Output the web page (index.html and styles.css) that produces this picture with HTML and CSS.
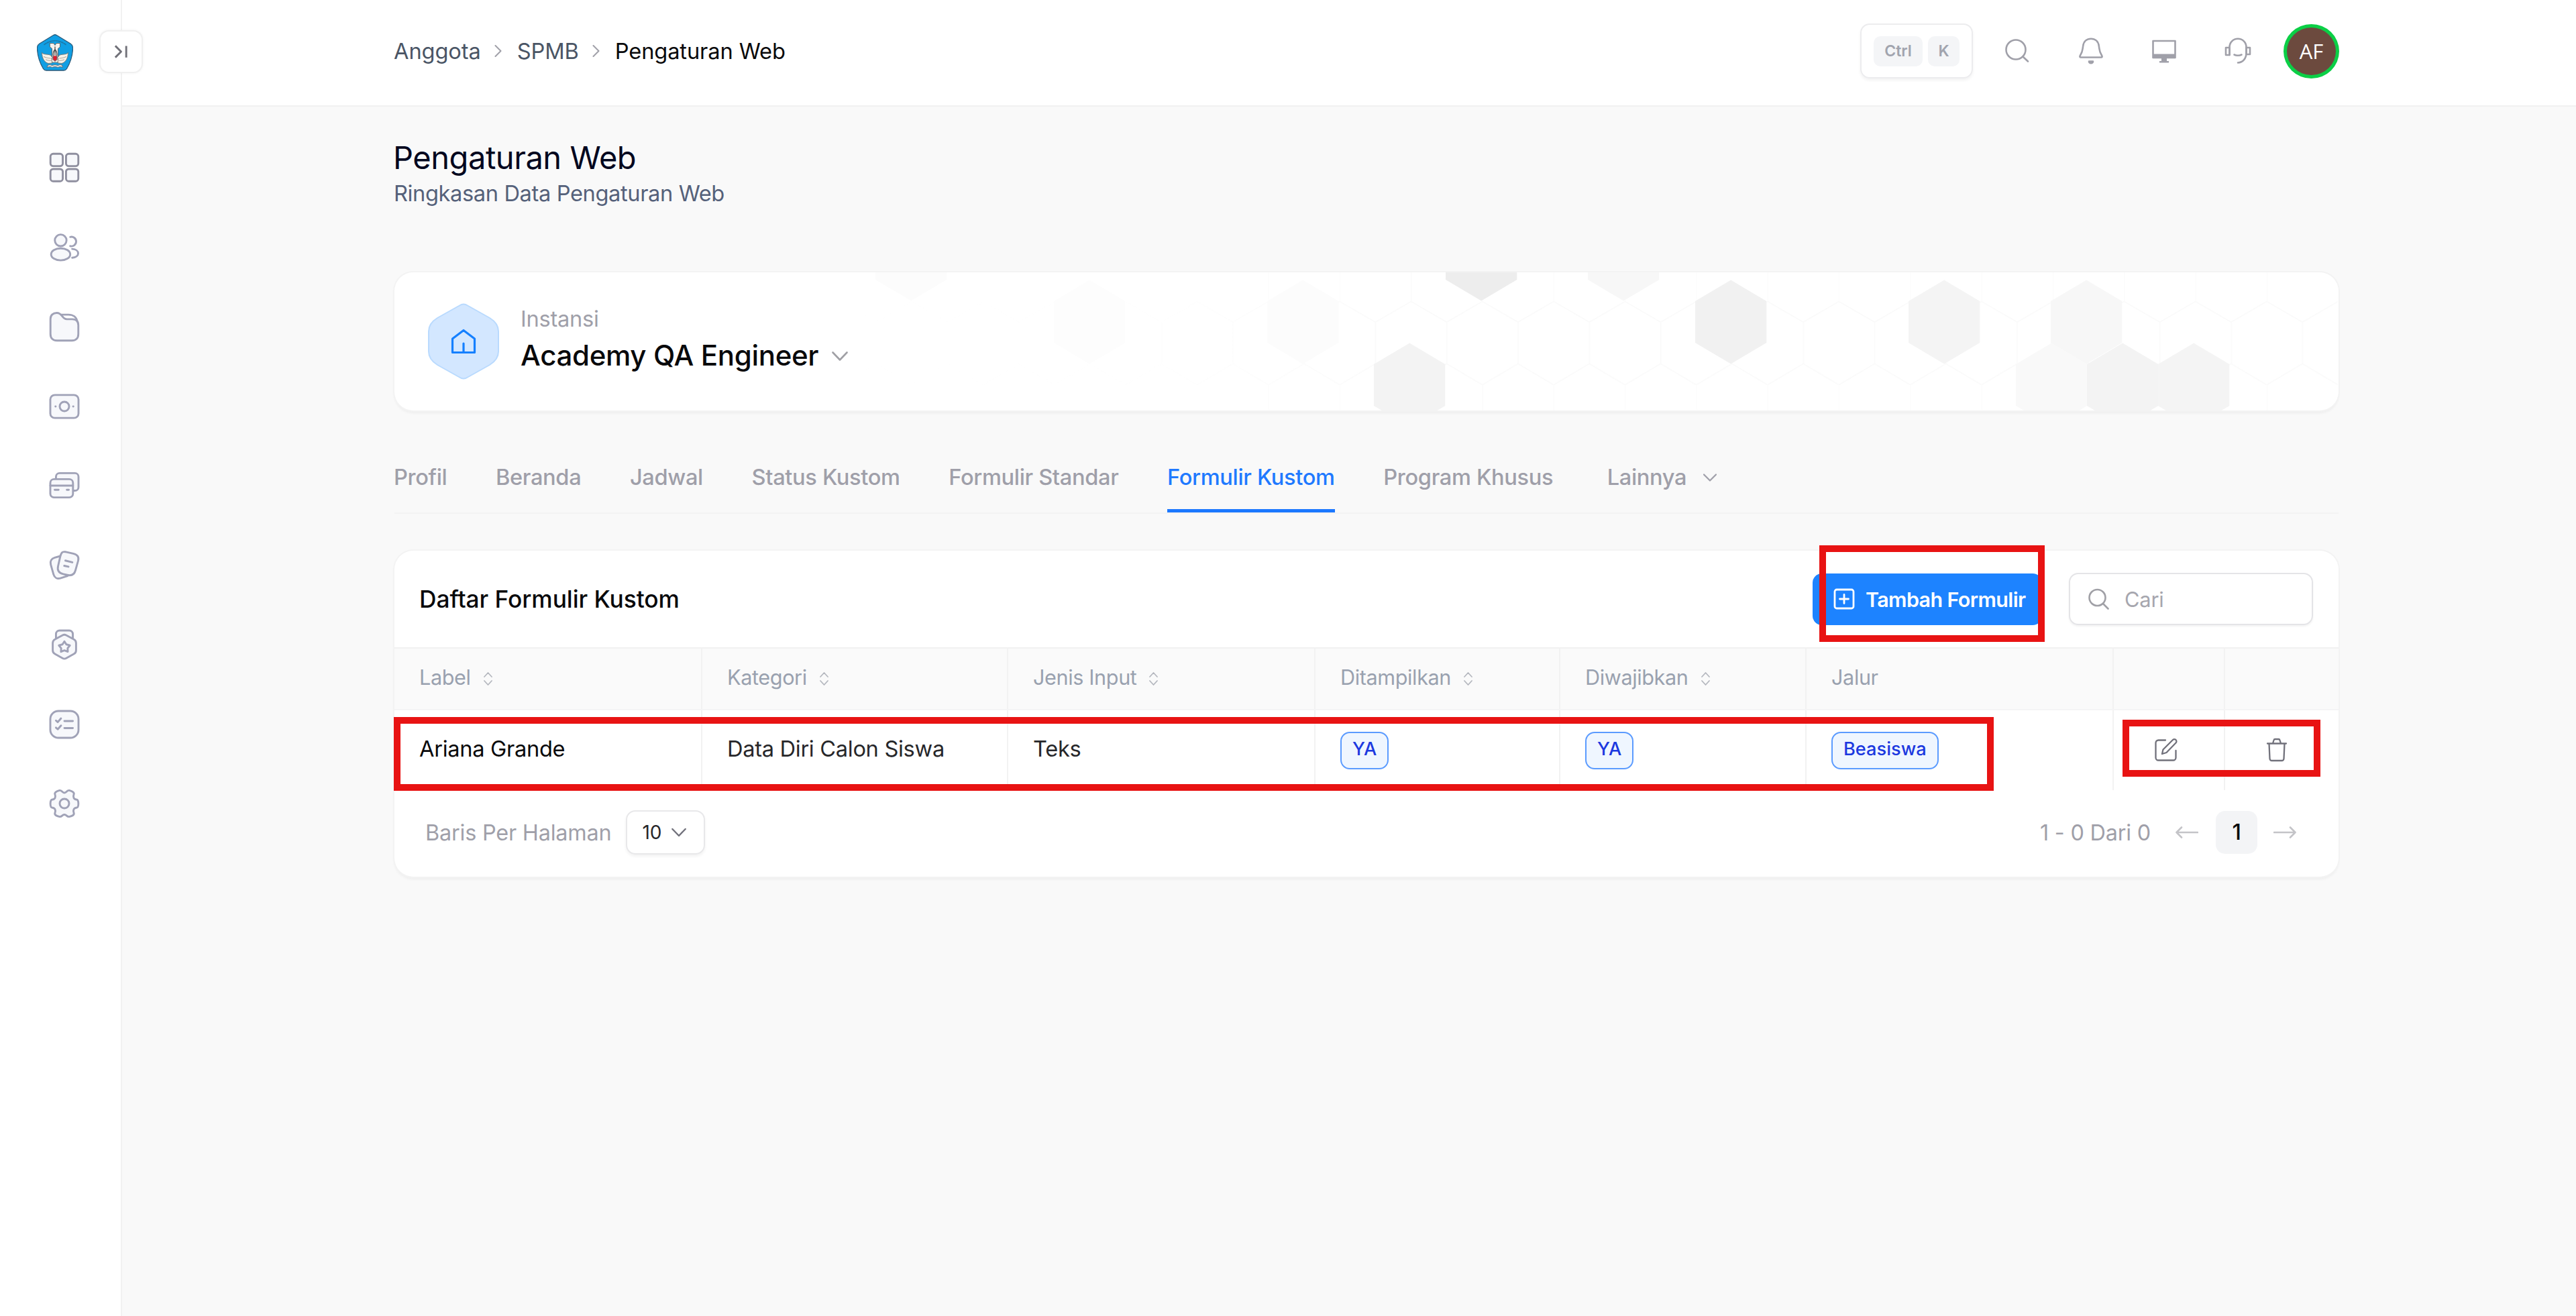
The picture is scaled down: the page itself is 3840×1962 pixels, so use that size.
FILE: index.html
```html
<!DOCTYPE html>
<html lang="id">
<head>
<meta charset="utf-8">
<title>Pengaturan Web</title>
<link rel="stylesheet" href="styles.css">
</head>
<body>
<div class="app">
  <aside class="sidebar">
    <div class="sidebar-top">
      <svg class="logo" viewBox="0 0 54 55">
        <path d="M24.500 1.500Q27 0 29.500 1.500L50 14Q54 16.500 53.500 22C53 33 49 44 44.500 51.500Q43 54 40 54H14Q11 54 9.500 51.500C5 44 1 33 .5 22Q0 16.500 4 14Z" fill="#109fe4" stroke="#2a5a7a" stroke-width="1.300"/>
        <path d="M11 15.500Q27 4 43 15.500" fill="none" stroke="#1c78a8" stroke-width="1.600" stroke-dasharray="3 1.500"/>
        <path d="M19.500 13.500H25L27 16.500 29 13.500H34.500V19L31.500 21.500V34H22.500V21.500L19.500 19Z" fill="#f4f1ee" stroke="#5a5a5a" stroke-width=".9"/>
        <path d="M27 19V31M24.500 33C23.500 28 25 25 27 22.500 29 25 30.500 28 29.500 33" fill="none" stroke="#4c4c4c" stroke-width="1.300"/>
        <path d="M7.500 27.500C11 31.500 16 29 20.500 31.500L24 36 22.500 43 17 43.500C12 42 7.500 37 7.500 27.500Z" fill="#f7f3ea" stroke="#77756e" stroke-width=".9"/>
        <path d="M46.500 27.500C43 31.500 38 29 33.500 31.500L30 36 31.500 43 37 43.500C42 42 46.500 37 46.500 27.500Z" fill="#f7f3ea" stroke="#77756e" stroke-width=".9"/>
        <path d="M10.500 33.500C14 36 17 35 20 36M13.500 38C16 39.500 18.500 39 21 39.500M43.500 33.500C40 36 37 35 34 36M40.500 38C38 39.500 35.500 39 33 39.500" fill="none" stroke="#aeaaa0" stroke-width="1.100"/>
        <path d="M22 36 27 40.500 32 36 31 42H23Z" fill="#f7f3ea" stroke="#77756e" stroke-width=".9"/>
        <path d="M24 34 27 31.500 30 34 29.500 38 27 40 24.500 38Z" fill="#dd1f2d"/>
        <path d="M16.500 46Q20 44.500 22.500 46.500 27 44.500 31.500 46.500 34 44.500 37.500 46L38.500 49.500Q34 47.500 31.500 49.500 27 47.500 22.500 49.500 20 47.500 15.500 49.500Z" fill="#e4e0d8" stroke="#56697a" stroke-width=".9"/>
      </svg>
    </div>
    <nav class="side-nav">
      <svg class="nav-icon nav-icon-strong" viewBox="0 0 24 24"><rect x="3.400" y="3.400" width="7.600" height="7.600" rx="1.700"/><rect x="13" y="3.400" width="7.600" height="7.600" rx="1.700"/><rect x="3.400" y="12.800" width="7.600" height="7.600" rx="1.700"/><rect x="13" y="12.800" width="7.600" height="7.600" rx="1.700"/></svg>
      <svg class="nav-icon" viewBox="0 0 24 24"><circle cx="9.700" cy="7.600" r="3.600"/><ellipse cx="9.700" cy="16.200" rx="5.900" ry="3.700"/><path class="open" d="M15.600 5.500a2.900 2.900 0 1 1 0 5.600M16.800 12.900c2.300.2 3.700 1.300 3.700 2.700 0 1.400-1.400 2.500-3.700 2.700"/></svg>
      <svg class="nav-icon" viewBox="0 0 24 24"><path d="M3.400 7.200C3.400 4.900 5 3.500 7.300 3.500c3.700 0 3 3.900 6.200 3.900h3.300c2.500 0 3.800 1.400 3.800 3.700v5.400c0 2.600-1.500 4.100-4.100 4.100h-9c-2.600 0-4.100-1.500-4.100-4.100z"/><path class="open" d="M10 4.600h4.500c2.800 0 5 1.500 5.400 4.200"/></svg>
      <svg class="nav-icon" viewBox="0 0 24 24"><rect x="3.300" y="4.900" width="17.400" height="14.200" rx="2.800"/><circle cx="12" cy="12" r="2.900"/><path class="open" d="M6.500 12h.1M17.400 12h.1"/></svg>
      <svg class="nav-icon" viewBox="0 0 24 24"><path d="M6.800 8V6.500a2.200 2.200 0 0 1 2.200-2.200h9.500a2.200 2.200 0 0 1 2.200 2.200v6.400a2.200 2.200 0 0 1-2.200 2.200h-1.200"/><rect x="3.300" y="8" width="14" height="11.300" rx="2.300"/><path class="open" d="M3.300 12h14M6 14.600h2.400M13.500 14.600h1.200"/></svg>
      <svg class="nav-icon" viewBox="0 0 24 24"><path d="M9.500 6.200 6 7.200c-2 .6-3 2.200-2.400 4.300l1.700 6c.6 2 2.200 3 4.200 2.400l4.500-1.400"/><path d="m12.500 3.600 5 1.100c2.600.6 3.600 2.100 3 4.400l-1.700 6c-.7 2.500-2.400 3.400-5 2.800l-2.500-.6c-2.800-.6-3.800-2.400-3.200-4.900l1.300-5.700c.6-2.400 1.100-3.400 3.100-3.100z"/><path class="open" d="m12.600 9 4.300 1.100M11.900 12.200l2.600.6"/></svg>
      <svg class="nav-icon" viewBox="0 0 24 24"><path d="M6.800 8V5.500A2.200 2.200 0 0 1 9 3.300h6a2.200 2.200 0 0 1 2.200 2.200V8"/><path d="M10.900 6.200a2.400 2.400 0 0 1 2.200 0l4.600 2.500a2.700 2.700 0 0 1 1.500 2.400v4.400c0 1-.5 1.900-1.400 2.300l-4.600 2.600a2.400 2.400 0 0 1-2.400 0l-4.600-2.600a2.600 2.600 0 0 1-1.400-2.300v-4.400c0-1 .5-1.900 1.500-2.400z"/><path d="m12 10 1.200 1.900 2.200.6-1.400 1.700.1 2.200-2.100-.8-2.100.8.100-2.200-1.400-1.700 2.200-.6z"/></svg>
      <svg class="nav-icon" viewBox="0 0 24 24"><rect x="3.300" y="3.700" width="17.400" height="16.600" rx="5"/><path class="open" d="m6.800 9.600 1.100 1 2-2.300M6.800 14l1.100 1 2-2.300M12 9.900h5.200M12 14.300h5.200"/></svg>
      <svg class="nav-icon" viewBox="0 0 24 24"><path d="M9 3.900c-2 .5-3.300 1.300-2.800 2.500.6 1.600 0 3-1.600 3.100-1.600.1-1.700 5 0 5.100 1.600.1 2.200 1.500 1.600 3.100-.5 1.300.9 2 2.800 2.400 1.500.3 1.600-1.300 3-1.300s1.500 1.600 3 1.300c1.900-.4 3.300-1.100 2.800-2.400-.6-1.600 0-3 1.600-3.100 1.700-.1 1.600-5 0-5.100-1.600-.1-2.200-1.500-1.600-3.100.5-1.200-.8-2-2.800-2.500-1.400-.3-1.600 1.500-3 1.500S10.400 3.600 9 3.900z"/><circle cx="12" cy="12" r="2.900"/></svg>
    </nav>
    <button class="sidebar-toggle"><svg viewBox="0 0 24 24"><path d="M3 3l9 9-9 9M20 3v18"/></svg></button>
  </aside>

  <div class="main">
    <header class="topbar">
      <div class="crumbs">
        <span class="crumb">Anggota</span>
        <svg class="crumb-sep" viewBox="0 0 12 18"><path d="M1.500 1l8 8-8 8"/></svg>
        <span class="crumb">SPMB</span>
        <svg class="crumb-sep" viewBox="0 0 12 18"><path d="M1.500 1l8 8-8 8"/></svg>
        <span class="crumb crumb-current">Pengaturan Web</span>
      </div>
      <div class="tools">
        <div class="shortcut"><kbd class="key key-ctrl">Ctrl</kbd><kbd class="key key-k">K</kbd></div>
        <svg class="tool-icon" viewBox="0 0 40 40"><circle cx="18" cy="18" r="14.500"/><path d="M28.500 28.500l7.500 7"/></svg>
        <svg class="tool-icon" viewBox="0 0 40 40"><path d="M4.500 29.500c-1.500 0-1.200-1.600-.7-2.500 4-6 3.500-8.500 4.300-14C9 5.500 14 1.800 20 1.800S31 5.500 31.900 13c.8 5.500.3 8 4.300 14 .5.900.8 2.500-.7 2.500z"/><path d="M17 35.500c.5 3.600 5.500 3.600 6 0z"/></svg>
        <svg class="tool-icon" viewBox="0 0 40 40"><path d="M3.500 5h33v25h-33z"/><path class="solid" d="M3 24.500h34V31H3zM16 31h8v4h3v2.500H13V35h3z"/></svg>
        <svg class="tool-icon" viewBox="0 0 40 40"><path d="M7.500 26V14.500C7.500 7 13 1.800 20 1.800S32.500 7 32.500 14.500V23c0 8-5 14.300-12.500 14.500"/><path d="M7.500 15H2v11h5.500zM32.500 15H38v10h-5.500z"/><path d="M14.500 25.500c3 1.500 8 1.500 11 0"/></svg>
        <div class="avatar">AF</div>
      </div>
    </header>

    <div class="page">
      <h1 class="page-title">Pengaturan Web</h1>
      <p class="page-sub">Ringkasan Data Pengaturan Web</p>

      <section class="tenant">
        <svg class="pattern" viewBox="-1 0 2240 206">
          <defs>
            <path id="hex" d="M53.200 -62.500 106.300 -31V31L53.200 62.500 0 31V-31z"/>
            <pattern id="grid" width="106.300" height="187.600" patternUnits="userSpaceOnUse" patternTransform="translate(6 -19.800)">
              <path d="M0 63.200V0M0 63.200 53.200 94M106.300 63.200 53.200 94V156L0 187.600M53.200 156 106.300 187.600" fill="none" stroke="#fafafa" stroke-width="1.600"/>
            </pattern>
            <linearGradient id="fade"><stop offset="0" stop-color="#fff" stop-opacity="0"/><stop offset=".22" stop-color="#fff" stop-opacity=".1"/><stop offset=".38" stop-color="#fff"/></linearGradient>
            <mask id="reveal"><rect x="-2" width="2240" height="206" fill="url(#fade)"/></mask>
          </defs>
          <rect x="-2" width="2240" height="206" fill="url(#grid)" mask="url(#reveal)"/>
          <use href="#hex" x="58" y="-20" fill="#fcfcfc"/>
          <use href="#hex" x="908" y="-20" fill="#ededed"/>
          <use href="#hex" x="1120" y="-20" fill="#f7f7f7"/>
          <use href="#hex" x="324" y="74" fill="#fdfdfd"/>
          <use href="#hex" x="642" y="74" fill="#fcfcfc"/>
          <use href="#hex" x="1280" y="74" fill="#f1f1f1"/>
          <use href="#hex" x="1598" y="74" fill="#f4f4f4"/>
          <use href="#hex" x="1810" y="74" fill="#f7f7f7"/>
          <use href="#hex" x="801" y="168" fill="#f3f3f3"/>
          <use href="#hex" x="1758" y="168" fill="#f9f9f9"/>
          <use href="#hex" x="1864" y="168" fill="#f3f3f3"/>
          <use href="#hex" x="1970" y="168" fill="#f4f4f4"/>
        </svg>
        <svg class="tenant-badge" viewBox="0 0 106 114">
          <path d="M47 3.500Q53 -.5 59 3.500L92 22Q105 30 105 42V72Q105 84 92 92L59 110.500Q53 114.500 47 110.500L14 92Q1 84 1 72V42Q1 30 14 22Z" fill="#d3e7ff" stroke="#b9dafe" stroke-width="2"/>
          <path d="M36.500 53 53 40.500 69.500 53V73.500H36.500ZM53 60V73" fill="none" stroke="#1580ff" stroke-width="3.200"/>
        </svg>
        <div class="tenant-text">
          <span class="tenant-label">Instansi</span>
          <div class="tenant-name"><span>Academy QA Engineer</span><svg viewBox="0 0 24 14"><path d="M1.500 1.500 12 12.500 22.500 1.500"/></svg></div>
        </div>
      </section>

      <nav class="tabs">
        <a class="tab">Profil</a>
        <a class="tab">Beranda</a>
        <a class="tab">Jadwal</a>
        <a class="tab">Status Kustom</a>
        <a class="tab">Formulir Standar</a>
        <a class="tab tab-active">Formulir Kustom</a>
        <a class="tab">Program Khusus</a>
        <a class="tab tab-more"><span>Lainnya</span><svg viewBox="0 0 20 12"><path d="M1 1.500 10 10.500 19 1.500"/></svg></a>
      </nav>

      <section class="card">
        <div class="card-head">
          <h2 class="card-title">Daftar Formulir Kustom</h2>
          <button class="add"><svg viewBox="0 0 32 32"><rect x="2" y="2" width="28" height="28" rx="3"/><path d="M16 9.500v13M9.500 16h13"/></svg><span>Tambah Formulir</span></button>
          <label class="search"><svg viewBox="0 0 32 32"><circle cx="14.500" cy="14" r="12"/><path d="M23 23l7.500 7.500"/></svg><span>Cari</span></label>
        </div>
        <div class="grid grid-head">
          <div class="cell"><span>Label</span><svg class="sort" viewBox="0 0 14 22"><path d="M1.500 8 7 2l5.500 6M1.500 14 7 20l5.500-6"/></svg></div>
          <div class="cell"><span>Kategori</span><svg class="sort" viewBox="0 0 14 22"><path d="M1.500 8 7 2l5.500 6M1.500 14 7 20l5.500-6"/></svg></div>
          <div class="cell"><span>Jenis Input</span><svg class="sort" viewBox="0 0 14 22"><path d="M1.500 8 7 2l5.500 6M1.500 14 7 20l5.500-6"/></svg></div>
          <div class="cell"><span>Ditampilkan</span><svg class="sort" viewBox="0 0 14 22"><path d="M1.500 8 7 2l5.500 6M1.500 14 7 20l5.500-6"/></svg></div>
          <div class="cell"><span>Diwajibkan</span><svg class="sort" viewBox="0 0 14 22"><path d="M1.500 8 7 2l5.500 6M1.500 14 7 20l5.500-6"/></svg></div>
          <div class="cell"><span>Jalur</span></div>
          <div class="cell"></div>
          <div class="cell"></div>
        </div>
        <div class="grid grid-row">
          <div class="cell"><span class="value value-strong">Ariana Grande</span></div>
          <div class="cell"><span class="value">Data Diri Calon Siswa</span></div>
          <div class="cell"><span class="value">Teks</span></div>
          <div class="cell"><span class="badge">YA</span></div>
          <div class="cell"><span class="badge">YA</span></div>
          <div class="cell"><span class="badge">Beasiswa</span></div>
          <div class="cell cell-icon"><svg viewBox="0 0 36 36"><path d="M17 3.500H6.500a4 4 0 0 0-4 4v22a4 4 0 0 0 4 4h22a4 4 0 0 0 4-4V19"/><path d="M12 24l1.500-6.500L28 3a2.600 2.600 0 0 1 4.500 4.500L18.500 22z"/></svg></div>
          <div class="cell cell-icon"><svg viewBox="0 0 36 36"><path d="M4 8.500h28M6.500 8.500l1 22.500a3 3 0 0 0 3 3h15a3 3 0 0 0 3-3l1-22.500M12 8.500l1.500-5a2 2 0 0 1 2-1.500h5a2 2 0 0 1 2 1.500l1.500 5"/></svg></div>
        </div>
        <div class="card-foot">
          <span class="foot-label">Baris Per Halaman</span>
          <div class="page-size"><span>10</span><svg viewBox="0 0 24 14"><path d="M1.500 1.500 12 12.500 22.500 1.500"/></svg></div>
          <span class="foot-count">1 - 0 Dari 0</span>
          <svg class="arrow" viewBox="0 0 34 18"><path d="M9 1.500 1.500 9 9 16.500M1.500 9H33"/></svg>
          <span class="page-now">1</span>
          <svg class="arrow" viewBox="0 0 34 18"><path d="M25 1.500 32.500 9 25 16.500M32.500 9H1"/></svg>
        </div>
      </section>
    </div>
  </div>
  <div class="mark mark-add"></div>
  <div class="mark mark-row"></div>
  <div class="mark mark-actions"></div>
</div>
</body>
</html>
```
FILE: styles.css
```css
* { box-sizing: border-box; }
body {
  margin: 0;
  background: #f9f9f9;
  font-family: Inter, "Liberation Sans", sans-serif;
  font-optical-sizing: none;
  color: #09090b;
}
h1, h2, p { margin: 0; font-weight: 400; }
svg { display: block; flex: none; fill: none; stroke-linecap: round; stroke-linejoin: round; }
button { font: inherit; padding: 0; }

.app { position: relative; display: flex; width: 3840px; height: 1962px; overflow: hidden; }

/* Sidebar */
.sidebar { position: relative; flex: none; width: 182px; background: #fff; border-right: 2px solid #f2f2f2; }
.sidebar-top { height: 157px; padding: 51px 0 0 55px; }
.logo { width: 54px; height: 55px; }
.side-nav { display: flex; flex-direction: column; align-items: center; gap: 60.5px; padding: 64px 0 0 11px; }
.nav-icon { width: 58px; height: 58px; stroke: #a0a2b7; stroke-width: 1.2; fill: #f7f8fb; }
.nav-icon-strong { stroke: #8f8f9f; }
.nav-icon .open { fill: none; }
.sidebar-toggle {
  position: absolute; left: 148px; top: 45px; z-index: 2;
  display: flex; align-items: center; justify-content: center;
  width: 65px; height: 64px;
  border: 2px solid #f0f0f0; border-radius: 14px; background: #fff;
  box-shadow: 0 0 4px rgba(0, 0, 0, .05);
}
.sidebar-toggle svg { width: 23px; height: 24px; stroke: #717179; stroke-width: 3; stroke-linecap: butt; }

/* Top bar */
.main { flex: 1; min-width: 0; }
.topbar {
  display: flex; align-items: center; justify-content: space-between;
  height: 159px; padding: 0 353px 5px 405px;
  background: #fff; border-bottom: 2px solid #f1f1f1;
}
.crumbs { display: flex; align-items: center; font-size: 32.6px; letter-spacing: -.1px; color: #4a5565; }
.crumb-sep { width: 12px; height: 18px; margin: 0 22px 0 20px; stroke: #a0a0a8; stroke-width: 2; }
.crumb-current { color: #09090b; }
.tools { display: flex; align-items: center; }
.shortcut {
  display: flex; align-items: center; justify-content: center; gap: 8px;
  width: 168px; height: 82px; margin-right: 46px;
  border: 2px solid #ececee; border-radius: 14px;
  box-shadow: 0 3px 4px rgba(0, 0, 0, .05);
}
.key {
  display: flex; align-items: center; justify-content: center;
  height: 45px; border-radius: 10px; background: #f4f5f7;
  font: 600 23px/1 Inter, sans-serif; color: #a1a4ae;
}
.key-ctrl { width: 73px; }
.key-k { width: 47px; }
.tool-icon { width: 40px; height: 40px; margin-right: 69.5px; stroke: #a0a0a9; stroke-width: 2.6; }
.tool-icon .solid { fill: #a0a0a9; stroke: none; }
.avatar {
  display: flex; align-items: center; justify-content: center;
  width: 83px; height: 81px; margin-left: -21px;
  border: 5px solid #0bcf46; border-radius: 50%; background: #6c4a3e;
  font: 500 31px/1 "Open Sans", sans-serif; color: #fff;
}

/* Page */
.page { width: 3304px; padding: 47px 0 0 406px; }
.page-title { margin-left: -2px; font-size: 47px; line-height: 58px; letter-spacing: -.45px; color: #03071e; }
.page-sub { margin-left: -1px; font-size: 32.6px; line-height: 48px; letter-spacing: -.37px; color: #55617a; }

.tenant {
  position: relative;
  display: flex; align-items: center;
  height: 206px; margin-top: 94px; padding-left: 50px;
  border-radius: 28px; background: #fff;
  box-shadow: 0 0 0 2px #f3f3f3, 0 4px 4px rgba(0, 0, 0, .05);
}
.pattern { position: absolute; right: 0; top: 0; width: 2240px; height: 206px; border-radius: 0 28px 28px 0; overflow: hidden; }
.tenant-badge { width: 106px; height: 114px; }
.tenant-text { position: relative; padding: 0 0 4px 32px; }
.tenant-label { display: block; font-size: 32.6px; line-height: 46px; letter-spacing: -.25px; color: #9f9fa9; }
.tenant-name { display: flex; align-items: center; font-size: 42px; line-height: 64px; font-weight: 500; letter-spacing: -.32px; }
.tenant-name svg { width: 24px; height: 14px; margin: 2px 0 0 20px; stroke: #a0a0a5; stroke-width: 2.6; }

/* Tabs */
.tabs { display: flex; height: 110px; margin-top: 44px; margin-bottom: 1px; border-bottom: 2px solid #f3f3f3; }
.tab {
  margin-right: 72.6px; padding-top: 31px; height: 108px;
  font-size: 32.6px; line-height: 48px; font-weight: 500; letter-spacing: -.34px; color: #9f9fa9; white-space: nowrap;
}
.tab:first-child { margin-left: -1px; }
.tab-active { color: #2079ff; border-bottom: 5px solid #1c78ff; }
.tab-more { display: flex; padding-left: 8px; }
.tab-more svg { width: 20px; height: 12px; margin: 19px 0 0 25px; stroke: #9f9fa9; stroke-width: 2.2; }

/* Table card */
.card {
  height: 486px; margin-top: 55px;
  border-radius: 28px; background: #fff;
  box-shadow: 0 0 0 2px #f3f3f3, 0 4px 4px rgba(0, 0, 0, .05);
}
.card-head { display: flex; align-items: center; height: 146px; padding: 0 38px 0 37px; border-bottom: 2px solid #f1f1f1; }
.card-title { flex: 1; font-size: 35.3px; font-weight: 500; letter-spacing: -.05px; }
.add {
  display: flex; align-items: center;
  width: 342px; height: 77px; padding-left: 31px; margin-right: 40px;
  border: 0; border-radius: 14px; background: #1d83ff;
  font-size: 30.5px; font-weight: 600; letter-spacing: -.65px; color: #fff; white-space: nowrap;
}
.add svg { width: 32px; height: 32px; margin-right: 16px; stroke: #fff; stroke-width: 2.8; }
.search {
  display: flex; align-items: center;
  width: 364px; height: 78px; padding-left: 26px;
  border: 2px solid #e4e4e7; border-radius: 14px;
  font-size: 30.8px; letter-spacing: -.2px; color: #a6a6ae;
  box-shadow: 0 2px 3px rgba(0, 0, 0, .05);
}
.search svg { width: 32px; height: 32px; margin-right: 23px; stroke: #a0a0a6; stroke-width: 2.6; }

.grid { display: grid; grid-template-columns: 459px 456px 458px 365px 367px 458px 166px 169px; }
.cell { display: flex; align-items: center; padding-left: 37px; border-right: 2px solid #f2f2f2; white-space: nowrap; }
.cell:last-child { border-right: 0; }
.grid-head { height: 92px; background: #fafafa; border-bottom: 2px solid #f4f4f5; font-size: 30.6px; letter-spacing: -.38px; color: #99a1af; }
.grid-head .cell { padding-bottom: 5px; }
.sort { width: 15px; height: 22px; margin: 5px 0 0 18px; stroke: #b4b7be; stroke-width: 1.7; }
.grid-row { height: 119px; }
.value { margin-bottom: 5px; font-size: 32.6px; letter-spacing: -.3px; color: #27272a; }
.value-strong { color: #09090b; }
.badge {
  height: 56px; padding: 0 16px;
  border: 2px solid #5b9bff; border-radius: 14px; background: #eff6ff;
  font-size: 27.2px; line-height: 48px; font-weight: 500; color: #1c39e0;
}
.cell-icon svg { width: 36px; height: 36px; stroke: #71717b; stroke-width: 2.3; }
.cell-icon { padding: 0 8px 2px 0; justify-content: center; }
.cell-icon:last-child { padding-right: 15px; }

.card-foot { display: flex; align-items: center; height: 127px; padding: 0 63px 1px 46px; font-size: 32.4px; letter-spacing: -.2px; color: #9f9fa9; }
.page-size {
  display: flex; align-items: center;
  width: 118px; height: 66px; margin-left: 22px; padding-left: 22px;
  border: 2px solid #e8e8ea; border-radius: 14px;
  font-size: 28px; color: #27272a;
  box-shadow: 0 3px 4px rgba(0, 0, 0, .05);
}
.page-size svg { width: 22px; height: 14px; margin-left: 15px; stroke: #71717b; stroke-width: 2.6; }
.foot-count { margin-left: auto; }
.arrow { width: 34px; height: 18px; margin-left: 38px; stroke: #c4c4c8; stroke-width: 2.6; }
.arrow:nth-of-type(1) { margin-left: 37px; }
.page-now {
  width: 62px; height: 64px; margin: 0 -14px 0 26px;
  border-radius: 14px; background: #f3f4f6;
  font-weight: 500; line-height: 64px; text-align: center; color: #09090b;
}

/* Highlight frames drawn over the screen */
.mark { position: absolute; z-index: 5; border: 10px solid #e81313; }
.mark-add { left: 2712px; top: 813px; width: 336px; height: 144px; }
.mark-row { left: 587px; top: 1069px; width: 2385px; height: 110px; }
.mark-actions { left: 3164px; top: 1073px; width: 295px; height: 85px; }
```
